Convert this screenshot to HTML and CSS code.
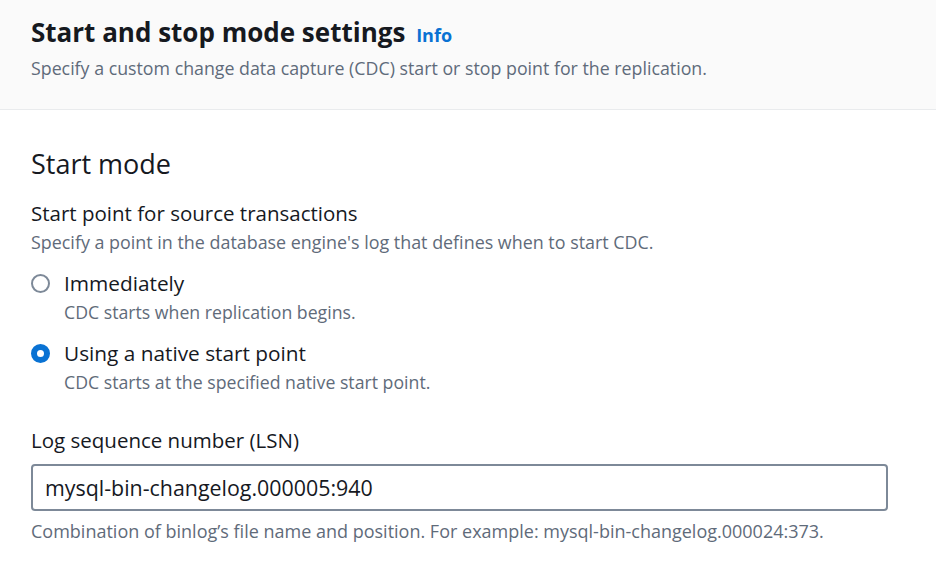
FILE: index.html
```html
<!DOCTYPE html>
<html>
<head>
<meta charset="utf-8">
<link rel="stylesheet" href="styles.css">
</head>
<body>
<div class="container">
  <header class="header">
    <h2 class="title">Start and stop mode settings <a class="info">Info</a></h2>
    <p class="desc">Specify a custom change data capture (CDC) start or stop point for the replication.</p>
  </header>
  <section class="content">
    <h3 class="section-title">Start mode</h3>
    <div class="field">
      <div class="label">Start point for source transactions</div>
      <div class="hint">Specify a point in the database engine's log that defines when to start CDC.</div>
      <div class="radios">
        <label class="radio">
          <span class="dot"></span>
          <span class="radio-text">
            <span class="radio-label">Immediately</span>
            <span class="radio-desc">CDC starts when replication begins.</span>
          </span>
        </label>
        <label class="radio">
          <span class="dot checked"></span>
          <span class="radio-text">
            <span class="radio-label">Using a native start point</span>
            <span class="radio-desc">CDC starts at the specified native start point.</span>
          </span>
        </label>
      </div>
    </div>
    <div class="field lsn">
      <div class="label">Log sequence number (LSN)</div>
      <div class="input">mysql-bin-changelog.000005:940</div>
      <div class="help">Combination of binlog’s file name and position. For example: mysql-bin-changelog.000024:373.</div>
    </div>
  </section>
</div>
</body>
</html>
```

FILE: styles.css
```css
* { box-sizing: border-box; }
html, body { margin: 0; padding: 0; background: #ffffff; }
body {
  font-family: "Open Sans", "Noto Sans", sans-serif;
  color: #16191f;
  width: 936px;
  height: 566px;
  overflow: hidden;
}
.header {
  background: #fafafa;
  border-bottom: 1px solid #e9ebed;
  padding: 14px 31px 0 31px;
  height: 110px;
}
.title {
  margin: 0;
  font-size: 26px;
  font-weight: 700;
  line-height: 36px;
  color: #16191f;
}
.info {
  font-size: 18px;
  color: #0972d3;
  font-weight: 700;
  margin-left: 4px;
}
.desc {
  margin: 3px 0 0 0;
  font-size: 17.8px;
  line-height: 24px;
  color: #5f6b7a;
}
.content {
  padding: 0 31px;
}
.section-title {
  margin: 37px 0 0 0;
  font-size: 27px;
  font-weight: 400;
  line-height: 34px;
}
.field { margin-top: 19px; }
.label {
  font-size: 20.5px;
  line-height: 26px;
}
.hint {
  font-size: 17.9px;
  line-height: 24px;
  color: #5f6b7a;
  margin-top: 4px;
}
.radios {
  display: flex;
  flex-direction: column;
  gap: 15px;
  margin-top: 15px;
}
.radio {
  display: flex;
  align-items: flex-start;
  gap: 14px;
}
.dot {
  flex: none;
  width: 19px;
  height: 19px;
  border-radius: 50%;
  border: 2px solid #7d8998;
  margin-top: 4.5px;
  background: #fff;
}
.dot.checked {
  border: 6px solid #0972d3;
}
.radio-text { display: flex; flex-direction: column; }
.radio-label { font-size: 20.8px; line-height: 28px; }
.radio-desc { font-size: 17.7px; line-height: 24px; color: #5f6b7a; margin-top: 3px; }
.lsn { margin-top: 33px; }
.input {
  margin-top: 11px;
  width: 857px;
  height: 47px;
  border: 2px solid #7d8998;
  border-radius: 4px;
  padding: 0 12px;
  display: flex;
  align-items: center;
  font-size: 21.4px;
}
.help {
  margin-top: 8px;
  font-size: 18px;
  line-height: 24px;
  color: #5f6b7a;
}
```
